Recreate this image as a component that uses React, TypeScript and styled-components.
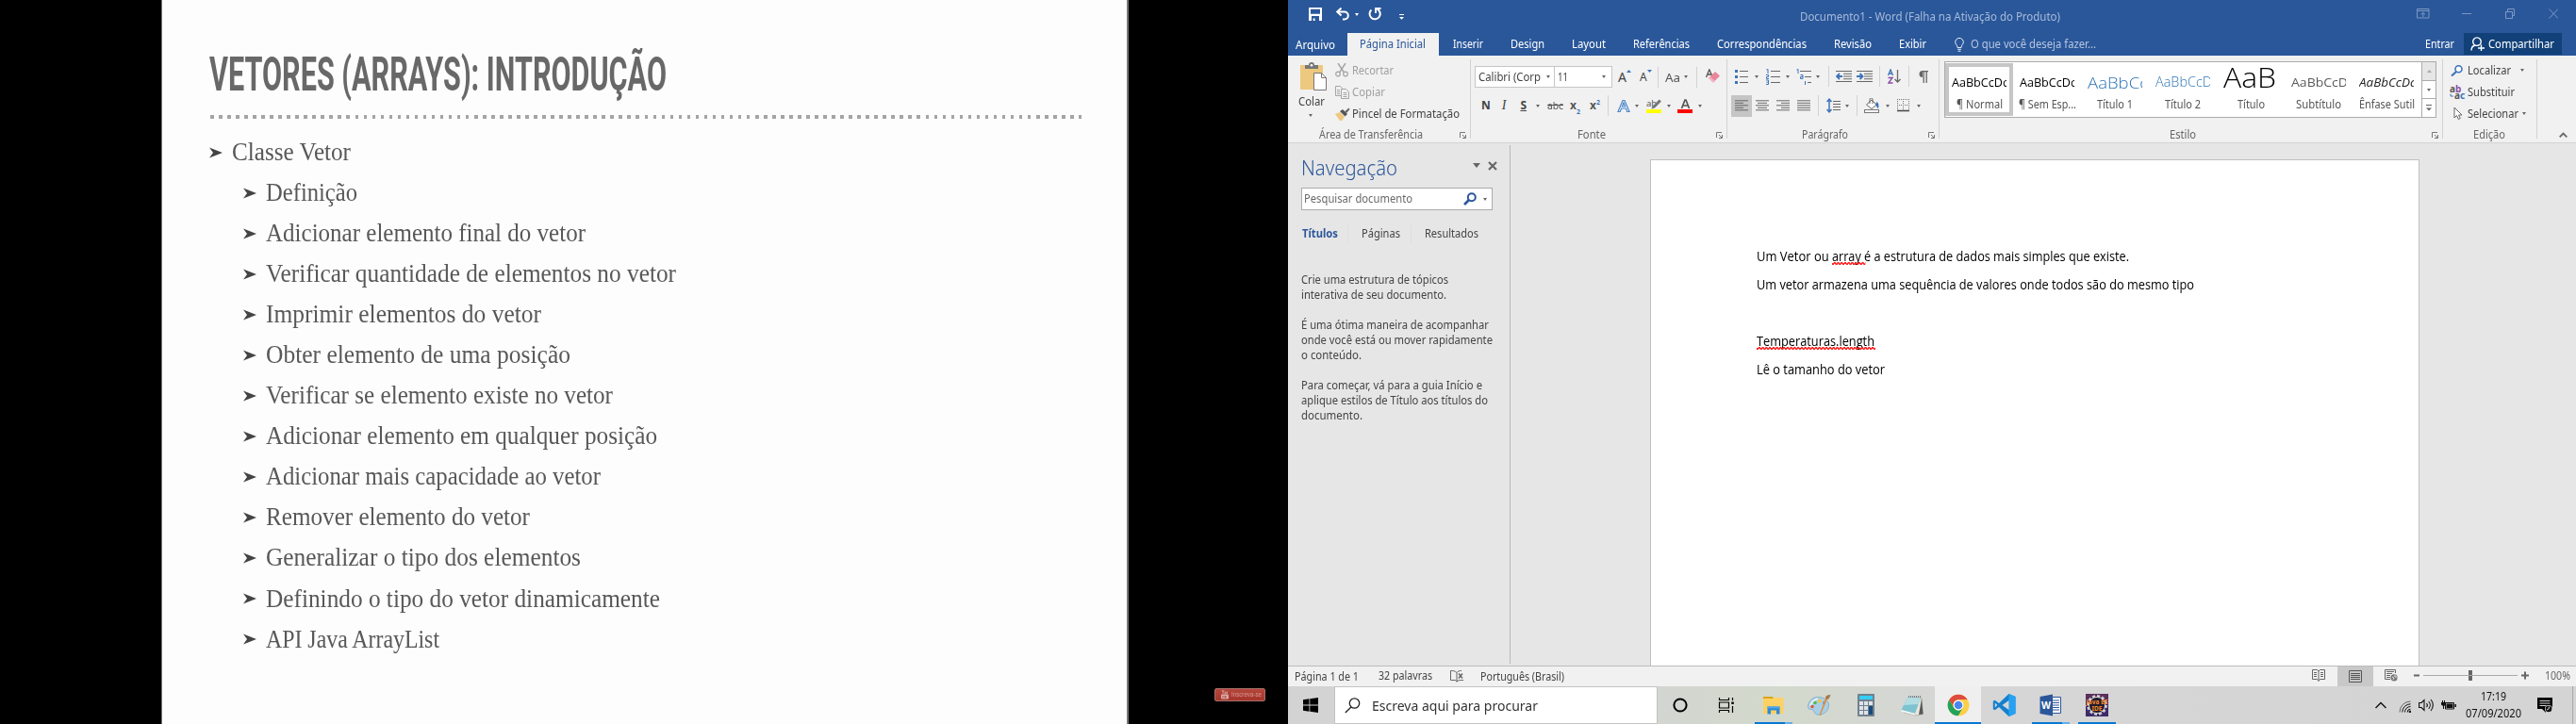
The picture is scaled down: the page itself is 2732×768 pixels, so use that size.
import React, { useLayoutEffect, useRef, useState } from "react";
import styled, { createGlobalStyle, css } from "styled-components";

const UI = `"Noto Sans", "Open Sans", sans-serif`;
const DOC = `"Open Sans", "Noto Sans", sans-serif`;
const SERIF = `"Liberation Serif", serif`;

const GlobalStyle = createGlobalStyle`
  *, *::before, *::after { box-sizing: border-box; }
  body { margin: 0; background: #000; font-family: ${UI}; overflow: hidden; }
  svg { display: block; flex: none; }
`;

/* ---------- text fitted to a fixed advance width ---------- */

const FitBox = styled.span<{ $w: number; $l: number; $size: number; $font: string }>`
  display: block;
  flex: none;
  width: ${(p) => p.$w}px;
  margin-left: ${(p) => p.$l}px;
  font-family: ${(p) => p.$font};
  font-size: ${(p) => p.$size}px;
  white-space: nowrap;
`;

const FitInner = styled.span<{ $weight: number; $color: string; $italic: boolean }>`
  display: inline-block;
  transform-origin: 0 50%;
  font-weight: ${(p) => p.$weight};
  font-style: ${(p) => (p.$italic ? "italic" : "normal")};
  color: ${(p) => p.$color};
`;

type FitProps = {
  w: number;
  l?: number;
  size?: number;
  weight?: number;
  color?: string;
  font?: string;
  italic?: boolean;
  children: React.ReactNode;
};

function Fit({ w, l = 0, size = 12, weight = 400, color = "#444", font = UI, italic = false, children }: FitProps) {
  const ref = useRef<HTMLSpanElement>(null);
  const [scale, setScale] = useState(1);
  useLayoutEffect(() => {
    if (!ref.current) return;
    ref.current.style.transform = "none";
    const natural = ref.current.getBoundingClientRect().width;
    ref.current.style.transform = `scaleX(${w / natural})`;
    setScale(w / natural);
  }, [w]);
  return (
    <FitBox $w={w} $l={l} $size={size} $font={font}>
      <FitInner
        ref={ref}
        $weight={weight}
        $color={color}
        $italic={italic}
        style={{ transform: `scaleX(${scale})` }}
      >
        {children}
      </FitInner>
    </FitBox>
  );
}

/* ---------- small shared parts ---------- */

const Desktop = styled.div`
  display: flex;
  width: 2732px;
  height: 768px;
`;

const Line = styled.div<{ $h: number; $pl?: number; $pt?: number }>`
  display: flex;
  align-items: center;
  height: ${(p) => p.$h}px;
  line-height: 16px;
  padding-left: ${(p) => p.$pl ?? 0}px;
  padding-top: ${(p) => p.$pt ?? 0}px;
`;

const Slot = styled.div<{ $l?: number; $t?: number }>`
  flex: none;
  margin-left: ${(p) => p.$l ?? 0}px;
  margin-top: ${(p) => p.$t ?? 0}px;
`;

const ThinRule = styled.div<{ $l: number }>`
  flex: none;
  width: 1px;
  height: 22px;
  margin-left: ${(p) => p.$l}px;
  background: #d2d2d2;
`;

const Arrow = styled.div<{ $l?: number; $c?: string; $s?: number }>`
  flex: none;
  width: 0;
  height: 0;
  margin-left: ${(p) => p.$l ?? 0}px;
  border: ${(p) => p.$s ?? 2.5}px solid transparent;
  border-top: ${(p) => (p.$s ?? 2.5) + 0.5}px solid ${(p) => p.$c ?? "#666"};
  border-bottom: 0;
`;

/* ---------- slide ---------- */

const VideoPane = styled.section`
  display: flex;
  flex: none;
  width: 1366px;
  background: #000;
`;

const Slide = styled.div`
  width: 1026px;
  margin-left: 171px;
  padding: 47px 48px 0 50px;
  background: #fdfdfd;
  border-left: 1px solid #777;
  border-right: 2px solid #777;
`;

const SlideHeading = styled.h1`
  margin: 0;
  height: 64px;
  line-height: 64px;
  filter: blur(0.6px);
`;

const Dots = styled.div`
  height: 4px;
  margin: 11px 0 0 1px;
  background: repeating-linear-gradient(90deg, #a4a4a4 0 3.6px, transparent 3.6px 9.03px);
  filter: blur(0.6px);
`;

const Topics = styled.ul`
  list-style: none;
  margin: 14px 0 0;
  padding: 0;
  filter: blur(0.55px);
`;

const Topic = styled.li<{ $sub: boolean }>`
  display: flex;
  align-items: center;
  height: 43.06px;
  line-height: 43px;
  padding-left: ${(p) => (p.$sub ? 36 : 0)}px;
  svg { margin: 0 10px 0 0; }
`;

const SubscribeArea = styled.div`
  display: flex;
  flex: 1;
  align-items: flex-end;
  justify-content: flex-end;
  padding: 0 24px 24px 0;
`;

const SubscribeBadge = styled.div`
  display: flex;
  align-items: center;
  width: 54px;
  height: 14px;
  padding-left: 6px;
  line-height: 12px;
  background: linear-gradient(#b5463c, #a5352b);
  border: 1px solid #a8706a;
  border-radius: 2px;
  filter: blur(0.35px);
`;

const topics: [string, number][] = [
  ["Classe Vetor", 126],
  ["Definição", 97],
  ["Adicionar elemento final do vetor", 339],
  ["Verificar quantidade de elementos no vetor", 435],
  ["Imprimir elementos do vetor", 292],
  ["Obter elemento de uma posição", 323],
  ["Verificar se elemento existe no vetor", 368],
  ["Adicionar elemento em qualquer posição", 415],
  ["Adicionar mais capacidade ao vetor", 355],
  ["Remover elemento do vetor", 280],
  ["Generalizar o tipo dos elementos", 334],
  ["Definindo o tipo do vetor dinamicamente", 418],
  ["API Java ArrayList", 184],
];

function SlideView() {
  return (
    <VideoPane>
      <Slide>
        <SlideHeading>
          <Fit w={485} size={50} weight={700} color="#686868" font="Roboto, sans-serif">
            VETORES (ARRAYS): INTRODUÇÃO
          </Fit>
        </SlideHeading>
        <Dots />
        <Topics>
          {topics.map(([text, w], i) => (
            <Topic key={text} $sub={i > 0}>
              <svg width="14" height="12" viewBox="0 0 14 12">
                <path d="M0 0.5L14 6L0 11.5L4 6Z" fill="#444" />
              </svg>
              <Fit w={w} size={26.3} color="#585858" font={SERIF}>
                {text}
              </Fit>
            </Topic>
          ))}
        </Topics>
      </Slide>
      <SubscribeArea>
        <SubscribeBadge>
          <svg width="8" height="10" viewBox="0 0 8 10">
            <path d="M1 0l1 2v2M3 0l-1 2M4 1.5v2.5h1.2V1.5M6.5 1.5V4" stroke="#d9aaa5" fill="none" strokeWidth=".8" />
            <rect y="4.6" width="8" height="5" rx="1" fill="#d9aaa5" />
            <path d="M2 6v2.5M4 6v2.2h1V6" stroke="#a5352b" fill="none" strokeWidth=".7" />
          </svg>
          <Fit w={32} l={3} size={6.5} color="#d59a94" font='"Liberation Sans", sans-serif'>
            Inscreva-se
          </Fit>
        </SubscribeBadge>
      </SubscribeArea>
    </VideoPane>
  );
}

/* ---------- word: title bar and tabs ---------- */

const WordWindow = styled.section`
  display: flex;
  flex-direction: column;
  flex: none;
  width: 1366px;
  background: #e6e6e6;
`;

const TitleBar = styled.header`
  display: flex;
  align-items: center;
  height: 35px;
  padding: 0 0 5px 22px;
  line-height: 16px;
  background: #2a579a;
`;

const TabBar = styled.nav`
  display: flex;
  align-items: center;
  height: 24px;
  line-height: 16px;
  background: #2a579a;
`;

const ActiveTab = styled.div`
  display: flex;
  align-items: center;
  width: 97px;
  height: 24px;
  margin-left: 13px;
  padding-left: 13px;
  background: #f1f1f1;
`;

const ShareButton = styled.div`
  display: flex;
  align-items: center;
  width: 104px;
  height: 23px;
  margin: 0 0 1px 10px;
  padding-left: 7px;
  background: #124078;
`;

function TitleRow() {
  return (
    <TitleBar>
      <svg width="14" height="14" viewBox="0 0 14 14">
        <path d="M0 0h14v14H0z M2 1.8v5h10v-5z M3 9v5h1.6v-2.6h2v2.6H11V9z" fill="#fff" fillRule="evenodd" />
      </svg>
      <Slot $l={15}>
        <svg width="14" height="14" viewBox="0 0 14 14">
          <path d="M1.5 4.5h7.3a4 4 0 0 1 0 8H7" fill="none" stroke="#fff" strokeWidth="2" />
          <path d="M5.5 0.5L1.3 4.5l4.2 4" fill="none" stroke="#fff" strokeWidth="2" />
        </svg>
      </Slot>
      <Arrow $l={6} $c="#fff" />
      <Slot $l={10}>
        <svg width="14" height="14" viewBox="0 0 14 14">
          <path d="M9.5 1.6A5.6 5.6 0 1 1 3.4 2.5" fill="none" stroke="#fff" strokeWidth="2" />
          <path d="M8 0v6M8 1h5.5" fill="none" stroke="#fff" strokeWidth="1.8" />
        </svg>
      </Slot>
      <Slot $l={19} $t={5}>
        <svg width="5" height="6" viewBox="0 0 5 6">
          <path d="M0 0h5v1H0zM0 3h5L2.5 5.8z" fill="#fff" />
        </svg>
      </Slot>
      <Slot $l={420} $t={5}>
        <Fit w={276} color="#a6bad8">
          Documento1 - Word (Falha na Ativação do Produto)
        </Fit>
      </Slot>
      <Slot $l={378}>
        <svg width="150" height="12" viewBox="0 0 150 12" fill="none" stroke="#7d98c2">
          <path d="M0.5 0.5h12.5v9.5H0.5zM0.5 2.5h12.5M6.8 9V4.5M4.5 6.5l2.3-2.2l2.3 2.2" />
          <path d="M48 5.5h10" />
          <path d="M94.500 3.500h7v7h-7zM96.500 3.500v-3h7v7h-2" />
          <path d="M140.500 0.500l9.500 10M150 0.500l-9.500 10" />
        </svg>
      </Slot>
    </TitleBar>
  );
}

function Tabs() {
  const items: [string, number, number][] = [
    ["Inserir", 32, 15],
    ["Design", 36, 29],
    ["Layout", 36, 29],
    ["Referências", 60, 29],
    ["Correspondências", 95, 29],
    ["Revisão", 40, 29],
    ["Exibir", 29, 29],
  ];
  return (
    <TabBar>
      <Slot $l={8} $t={2}>
        <Fit w={42} color="#fff">Arquivo</Fit>
      </Slot>
      <ActiveTab>
        <Fit w={70} color="#2a579a">Página Inicial</Fit>
      </ActiveTab>
      {items.map(([label, w, l]) => (
        <Fit key={label} w={w} l={l} color="#fff">{label}</Fit>
      ))}
      <Slot $l={30}>
        <svg width="10" height="15" viewBox="0 0 10 15" fill="none" stroke="#e8eef7">
          <path d="M3 10.500C3 8 0.700 7 0.700 4.700a4.300 4.300 0 0 1 8.600 0C9.300 7 7 8 7 10.500zM3.200 12.300h3.600M3.600 14.200h2.800" />
        </svg>
      </Slot>
      <Fit w={133} l={7} color="#b5c6e0">O que você deseja fazer...</Fit>
      <Fit w={31} l={349} color="#fff">Entrar</Fit>
      <ShareButton>
        <svg width="15" height="15" viewBox="0 0 15 15" fill="none" stroke="#fff" strokeWidth="1.4">
          <path d="M1 14.500C1 11.500 3 9.500 5 9a4.300 4.300 0 1 1 4 0M5 9c1 .6 2 .6 4 0M8 12h7M11.500 8.500v6.500" />
        </svg>
        <Fit w={70} l={4} color="#fff">Compartilhar</Fit>
      </ShareButton>
    </TabBar>
  );
}

/* ---------- word: ribbon ---------- */

const Ribbon = styled.div`
  display: flex;
  height: 93px;
  background: #f1f1f1;
  border-bottom: 1px solid #d2d2d2;
`;

const Group = styled.div<{ $w: number }>`
  display: flex;
  flex: none;
  flex-direction: column;
  width: ${(p) => p.$w}px;
`;

const GroupBody = styled.div<{ $row?: boolean }>`
  display: flex;
  flex-direction: ${(p) => (p.$row ? "row" : "column")};
  height: 73px;
  padding-top: 4px;
`;

const GroupRule = styled.div`
  flex: none;
  width: 1px;
  margin: 4px 0;
  background: #d2d2d2;
`;

const PasteColumn = styled.div`
  display: flex;
  flex-direction: column;
  width: 50px;
  padding-top: 3px;
  line-height: 16px;
`;

const Combo = styled.div<{ $w: number; $joined?: boolean }>`
  display: flex;
  align-items: center;
  width: ${(p) => p.$w}px;
  height: 23px;
  padding-left: 3px;
  background: #fff;
  border: 1px solid #c6c6c6;
  ${(p) => p.$joined && css`border-left: 0;`}
`;

const Glyph = styled.span<{ $l?: number; $s?: number; $b?: boolean; $i?: boolean; $u?: boolean; $c?: string }>`
  flex: none;
  margin-left: ${(p) => p.$l ?? 0}px;
  font-size: ${(p) => p.$s ?? 13}px;
  font-weight: ${(p) => (p.$b ? 700 : 400)};
  font-style: ${(p) => (p.$i ? "italic" : "normal")};
  font-family: ${(p) => (p.$i ? SERIF : UI)};
  text-decoration: ${(p) => (p.$u ? "underline" : "none")};
  color: ${(p) => p.$c ?? "#444"};
`;

const Pressed = styled.div`
  display: flex;
  align-items: center;
  justify-content: center;
  width: 22px;
  height: 23px;
  margin-left: 4px;
  background: #c5c5c5;
`;

const Launcher = () => (
  <svg width="7" height="7" viewBox="0 0 7 7" fill="none" stroke="#777">
    <path d="M0.500 6V0.500H6M3 3l3 3M6.500 3v3.500H3" />
  </svg>
);

function GroupLabel({ text, w, l, gap }: { text: string; w: number; l: number; gap?: number }) {
  return (
    <Line $h={19} $pt={2}>
      <Fit w={w} l={l} color="#666">{text}</Fit>
      {gap !== undefined && (
        <Slot $l={gap} $t={1}>
          <Launcher />
        </Slot>
      )}
    </Line>
  );
}

function ClipboardGroup() {
  return (
    <Group $w={193}>
      <GroupBody $row>
        <PasteColumn>
          <Slot $l={13}>
            <svg width="28" height="31" viewBox="0 0 28 31">
              <path d="M0 3h24v26H0z" fill="#edc87f" />
              <path d="M5 7V3h4a3 3 0 0 1 6 0h4v4z" fill="#777" />
              <circle cx="12" cy="3.300" r="1.300" fill="#fff" />
              <path d="M14.500 11.500h8l5 5v13h-13z" fill="#fff" stroke="#777" />
              <path d="M22.500 11.500v5h5" fill="none" stroke="#777" />
            </svg>
          </Slot>
          <Slot $t={3}>
            <Fit w={28} l={11}>Colar</Fit>
          </Slot>
          <Slot $t={5}>
            <Arrow $l={22} />
          </Slot>
        </PasteColumn>
        <div>
          <Line $h={23}>
            <svg width="14" height="15" viewBox="0 0 14 15" fill="none" stroke="#a5a5a5" strokeWidth="1.500">
              <path d="M3 0l6.500 10M11 0L4.500 10" />
              <circle cx="3" cy="11.500" r="2.300" strokeWidth="1.200" />
              <circle cx="11" cy="11.500" r="2.300" strokeWidth="1.200" />
            </svg>
            <Fit w={44} l={4} color="#a0a0a0">Recortar</Fit>
          </Line>
          <Line $h={23}>
            <svg width="15" height="14" viewBox="0 0 15 14" fill="#f1f1f1" stroke="#a5a5a5">
              <path d="M0.500 0.500h5l2 2v8h-7zM2 4.500h3M2 6.500h3M2 8.500h3" />
              <path d="M6.500 3.500h5l3 3v7h-8zM8.500 7.500h4M8.500 9.500h4M8.500 11.500h4" />
            </svg>
            <Fit w={35} l={3} color="#a0a0a0">Copiar</Fit>
          </Line>
          <Line $h={23}>
            <svg width="16" height="14" viewBox="0 0 16 14">
              <path d="M0 7l5-2l5 5l-3 4H5z" fill="#edc87f" />
              <path d="M5 4l3-2l5 5l-2.500 2.500z" fill="#555" />
              <path d="M10 4.500L14.500 0.500l1 1.500L12 6z" fill="#666" />
            </svg>
            <Fit w={114} l={2}>Pincel de Formatação</Fit>
          </Line>
        </div>
      </GroupBody>
      <GroupLabel text="Área de Transferência" w={110} l={33} gap={39} />
    </Group>
  );
}

function FontGroup() {
  return (
    <Group $w={271}>
      <GroupBody>
        <Line $h={37} $pl={4}>
          <Combo $w={85}>
            <Fit w={66}>Calibri (Corp</Fit>
            <Arrow $l={6} />
          </Combo>
          <Combo $w={61} $joined>
            <Fit w={11}>11</Fit>
            <Arrow $l={36} />
          </Combo>
          <Glyph $l={6} $s={14}>A</Glyph>
          <Slot $t={-12}>
            <svg width="5" height="3"><path d="M0 3L2.500 0L5 3z" fill="#3e74b8" /></svg>
          </Slot>
          <Glyph $l={9} $s={12}>A</Glyph>
          <Slot $t={-12}>
            <svg width="5" height="3"><path d="M0 0L2.500 3L5 0z" fill="#3e74b8" /></svg>
          </Slot>
          <ThinRule $l={6} />
          <Fit w={16} l={7} size={13} color="#555">Aa</Fit>
          <Arrow $l={4} />
          <ThinRule $l={9} />
          <Slot $l={9} $t={-2}>
            <svg width="15" height="15" viewBox="0 0 15 15">
              <path d="M0.500 9L3.800 0.800L7 8M1.700 6h4" fill="none" stroke="#555" strokeWidth="1.300" />
              <path d="M3 10l7-7l5 4.500l-7 7z" fill="#e8869a" />
              <path d="M4.500 8.500L10 13L8 14.500L3 10z" fill="#f3b6c1" />
            </svg>
          </Slot>
        </Line>
        <Line $h={24} $pl={11}>
          <Glyph $b $s={12}>N</Glyph>
          <Glyph $i $l={12} $s={14}>I</Glyph>
          <Glyph $b $u $l={15} $s={12}>S</Glyph>
          <Arrow $l={10} />
          <Fit w={17} l={8} size={11.500} color="#555">
            <s>abc</s>
          </Fit>
          <Glyph $b $l={7} $s={12} $c="#555">x</Glyph>
          <Slot $t={9}><Glyph $b $s={7} $c="#3e74b8">2</Glyph></Slot>
          <Glyph $b $l={10} $s={12} $c="#555">x</Glyph>
          <Slot $t={-10}><Glyph $b $s={7} $c="#3e74b8">2</Glyph></Slot>
          <ThinRule $l={8} />
          <Slot $l={9}>
            <svg width="14" height="15" viewBox="0 0 14 15">
              <path d="M1 13.500L6 1.500h2l5 12h-2.300l-1.200-3.500H4.500L3.300 13.500zM5.300 8h3.400L7 3.800z" fill="#fff" stroke="#4a86c8" strokeWidth="1.200" />
            </svg>
          </Slot>
          <Arrow $l={5} />
          <Slot $l={8}>
            <svg width="17" height="16" viewBox="0 0 17 16">
              <text x="0" y="9" fontFamily="Noto Sans" fontSize="9.500" fill="#555">ab</text>
              <path d="M6 9.500L13.500 1.500L16 3.500L9 10.500L5.500 11.500z" fill="#777" />
              <rect y="12" width="16" height="4" fill="#ff0" />
            </svg>
          </Slot>
          <Arrow $l={5} />
          <Slot $l={7}>
            <svg width="17" height="16" viewBox="0 0 17 16">
              <path d="M4.500 11L8 2h1l3.500 9M5.800 8h5.400" fill="none" stroke="#555" strokeWidth="1.700" />
              <rect y="12" width="16" height="4" fill="#f00" />
            </svg>
          </Slot>
          <Arrow $l={5} />
        </Line>
      </GroupBody>
      <GroupLabel text="Fonte" w={30} l={113} gap={117} />
    </Group>
  );
}

const Bars = ({ rows }: { rows: [number, number][] }) => (
  <svg width="14" height="12" viewBox="0 0 14 12">
    {rows.map(([x, w], i) => (
      <rect key={i} x={x} y={i * 2.5 + 0.3} width={w} height="1" fill="#666" />
    ))}
  </svg>
);

function ParagraphGroup() {
  return (
    <Group $w={224}>
      <GroupBody>
        <Line $h={36} $pl={8}>
          <svg width="14" height="15" viewBox="0 0 14 15">
            <path d="M0 0h3v3H0zM0 6h3v3H0zM0 12h3v3H0z" fill="#3e74b8" />
            <path d="M5 1h9v1H5zM5 7h9v1H5zM5 13h9v1H5z" fill="#666" />
          </svg>
          <Arrow $l={7} />
          <Slot $l={8}>
            <svg width="15" height="17" viewBox="0 0 15 17">
              <path d="M0.500 1L2 0.500V5M0 6.500h2.500v2H0.500v2H3M0 12h2.500v4.500H0M0.500 14.200h2" stroke="#3e74b8" fill="none" />
              <path d="M5 2h10v1H5zM5 8h10v1H5zM5 14h10v1H5z" fill="#666" />
            </svg>
          </Slot>
          <Arrow $l={6} />
          <Slot $l={7}>
            <svg width="17" height="17" viewBox="0 0 17 17">
              <path d="M0.500 1L2 0.500V5M4.500 6.500H7v4H4.500v-2H7M9.500 11.500v0M9.500 13v4" stroke="#3e74b8" fill="none" />
              <path d="M4 2h12v1H4zM9 8h7v1H9zM12 14h4v1h-4z" fill="#666" />
            </svg>
          </Slot>
          <Arrow $l={4} />
          <ThinRule $l={9} />
          <Slot $l={7}>
            <svg width="17" height="12" viewBox="0 0 17 12">
              <path d="M0 0h17v1H0zM8 2.800h9v1H8zM8 5.500h9v1H8zM8 8.200h9v1H8zM0 11h17v1H0z" fill="#666" />
              <path d="M7 6H1.500M4 3L1 6l3 3" stroke="#3e74b8" strokeWidth="1.800" fill="none" />
            </svg>
          </Slot>
          <Slot $l={5}>
            <svg width="17" height="12" viewBox="0 0 17 12">
              <path d="M0 0h17v1H0zM8 2.800h9v1H8zM8 5.500h9v1H8zM8 8.200h9v1H8zM0 11h17v1H0z" fill="#666" />
              <path d="M0 6h6M3.500 3l3 3l-3 3" stroke="#3e74b8" strokeWidth="1.800" fill="none" />
            </svg>
          </Slot>
          <ThinRule $l={7} />
          <Slot $l={8}>
            <svg width="14" height="16" viewBox="0 0 14 16" fill="none">
              <path d="M0.500 7L3 0.800L5.500 7M1.500 5h3" stroke="#3e74b8" strokeWidth="1.300" />
              <path d="M0.500 9.500h4.500L0.800 15H5.500" stroke="#8a4fa8" strokeWidth="1.400" />
              <path d="M10.500 1v13M7.500 11l3 3l3-3" stroke="#666" strokeWidth="1.300" />
            </svg>
          </Slot>
          <ThinRule $l={8} />
          <Slot $l={10}>
            <svg width="10" height="13" viewBox="0 0 10 13">
              <path d="M4 0h6v1.200H4zM4 0v7a3.500 3.500 0 0 1 0-7M4.500 0h1.300v13H4.500zM7.500 0h1.300v13H7.500z" fill="#666" />
            </svg>
          </Slot>
        </Line>
        <Line $h={26}>
          <Pressed>
            <Bars rows={[[0, 14], [0, 9], [0, 14], [0, 9], [0, 14]]} />
          </Pressed>
          <Slot $l={4}><Bars rows={[[0, 14], [2, 10], [0, 14], [2, 10], [0, 14]]} /></Slot>
          <Slot $l={8}><Bars rows={[[0, 14], [5, 9], [0, 14], [5, 9], [0, 14]]} /></Slot>
          <Slot $l={8}><Bars rows={[[0, 14], [0, 14], [0, 14], [0, 14], [0, 14]]} /></Slot>
          <ThinRule $l={8} />
          <Slot $l={8}>
            <svg width="15" height="16" viewBox="0 0 15 16">
              <path d="M3 1v14M0.500 4L3 1.200L5.500 4M0.500 12L3 14.800L5.500 12" stroke="#3e74b8" strokeWidth="1.500" fill="none" />
              <path d="M7 3h8v1H7zM7 6h8v1H7zM7 9h8v1H7zM7 12h8v1H7z" fill="#666" />
            </svg>
          </Slot>
          <Arrow $l={5} />
          <ThinRule $l={8} />
          <Slot $l={7}>
            <svg width="17" height="16" viewBox="0 0 17 16">
              <path d="M2.500 7L8 2l5 5l-5 4.500z" fill="#fff" stroke="#666" />
              <path d="M6 6V1.500a1.500 1.500 0 0 1 3 0V6" fill="none" stroke="#666" />
              <path d="M13 4c2.500 1 3 4 2 7c-2-1-2-3-2.500-4z" fill="#3e74b8" />
              <rect x="0.500" y="12.500" width="15" height="3" fill="#fff" stroke="#777" />
            </svg>
          </Slot>
          <Arrow $l={6} />
          <Slot $l={8}>
            <svg width="13" height="14" viewBox="0 0 13 14">
              <path d="M0.500 0v12M12.500 0v12M6.500 0v12M0 0.500h13M0 6.500h13" stroke="#777" strokeDasharray="1 1" />
              <path d="M0 12.500h13" stroke="#444" strokeWidth="1.500" />
            </svg>
          </Slot>
          <Arrow $l={8} />
        </Line>
      </GroupBody>
      <GroupLabel text="Parágrafo" w={49} l={79} gap={85} />
    </Group>
  );
}

const Gallery = styled.div`
  display: flex;
  width: 522px;
  height: 60px;
  margin: 2px 0 0 5px;
  background: #fff;
  border: 1px solid #ababab;
`;

const StyleCard = styled.div<{ $active: boolean }>`
  display: flex;
  flex-direction: column;
  align-items: center;
  width: 72px;
  height: 56px;
  margin-top: 1px;
  border: 4px solid ${(p) => (p.$active ? "#c6c6c6" : "transparent")};
`;

const Preview = styled.div<{ $lift: number }>`
  display: flex;
  align-items: center;
  width: 58px;
  height: 30px;
  padding-top: ${(p) => Math.max(0, 4 - p.$lift)}px;
  padding-bottom: ${(p) => Math.max(0, p.$lift - 4)}px;
  overflow: hidden;
  line-height: 22px;
`;

const CardName = styled.div`
  height: 16px;
  margin-top: 2px;
  line-height: 16px;
`;

const GalleryButtons = styled.div`
  display: flex;
  flex-direction: column;
  width: 15px;
  border-left: 1px solid #ababab;
`;

const GalleryButton = styled.div<{ $off?: boolean }>`
  display: flex;
  flex: 1;
  align-items: center;
  justify-content: center;
  background: ${(p) => (p.$off ? "#e6e6e6" : "#fff")};
  & + & { border-top: 1px solid #ababab; }
`;

type StyleDef = {
  name: string;
  w: number;
  sample: string;
  sw: number;
  size: number;
  color: string;
  weight?: number;
  italic?: boolean;
  lift?: number;
};

const styleCards: StyleDef[] = [
  { name: "¶ Normal", w: 49, sample: "AaBbCcDc", sw: 60, size: 12.3, color: "#000" },
  { name: "¶ Sem Esp...", w: 61, sample: "AaBbCcDc", sw: 60, size: 12.3, color: "#000" },
  { name: "Título 1", w: 38, sample: "AaBbCc", sw: 64, size: 17, color: "#2e74b5", weight: 300 },
  { name: "Título 2", w: 38, sample: "AaBbCcD", sw: 60, size: 14.3, color: "#2e74b5", weight: 300, lift: 3 },
  { name: "Título", w: 29, sample: "AaB", sw: 56, size: 29, color: "#000", weight: 300, lift: 12 },
  { name: "Subtítulo", w: 48, sample: "AaBbCcD", sw: 60, size: 12.3, color: "#5a5a5a" },
  { name: "Ênfase Sutil", w: 59, sample: "AaBbCcDc", sw: 60, size: 12.3, color: "#222", italic: true },
];

function StyleGroup() {
  return (
    <Group $w={533}>
      <GroupBody>
        <Gallery>
          {styleCards.map((s, i) => (
            <StyleCard key={s.name} $active={i === 0}>
              <Preview $lift={s.lift ?? 0}>
                <Fit w={s.sw} size={s.size} color={s.color} weight={s.weight} italic={s.italic} font={DOC}>
                  {s.sample}
                </Fit>
              </Preview>
              <CardName>
                <Fit w={s.w} color="#555">{s.name}</Fit>
              </CardName>
            </StyleCard>
          ))}
          <Slot $l={1} />
          <GalleryButtons>
            <GalleryButton $off>
              <svg width="5" height="3"><path d="M0 3L2.500 0L5 3z" fill="#aaa" /></svg>
            </GalleryButton>
            <GalleryButton><Arrow /></GalleryButton>
            <GalleryButton>
              <svg width="6" height="7"><path d="M0 0h6v1H0zM0 3.500h6L3 6.500z" fill="#666" /></svg>
            </GalleryButton>
          </GalleryButtons>
        </Gallery>
      </GroupBody>
      <GroupLabel text="Estilo" w={28} l={244} gap={250} />
    </Group>
  );
}

function EditGroup() {
  return (
    <Group $w={99}>
      <GroupBody>
        <Line $h={23} $pl={8}>
          <svg width="13" height="12" viewBox="0 0 13 12" fill="none" stroke="#3e74b8">
            <circle cx="8.500" cy="4.300" r="3.500" strokeWidth="1.600" fill="#fff" />
            <path d="M6 7L1 11.500" strokeWidth="2.200" />
          </svg>
          <Fit w={46} l={5}>Localizar</Fit>
          <Arrow $l={10} />
        </Line>
        <Line $h={23} $pl={7}>
          <svg width="17" height="16" viewBox="0 0 17 16" fontFamily="Noto Sans" fontSize="10" fontWeight="700">
            <text x="0" y="8" fill="#555" textLength="6">a</text>
            <text x="6" y="8" fill="#8a4fa8" textLength="6">b</text>
            <text x="5" y="15" fill="#555" textLength="6">a</text>
            <text x="11" y="15" fill="#3e74b8" textLength="5">c</text>
            <path d="M1 9.500v2.500h3" stroke="#3e74b8" fill="none" />
          </svg>
          <Fit w={50} l={2}>Substituir</Fit>
        </Line>
        <Line $h={23} $pl={11}>
          <svg width="10" height="15" viewBox="0 0 10 15">
            <path d="M1 1v11l2.500-2.500l1.800 4l2-1l-1.800-3.500H9z" fill="#fff" stroke="#666" />
          </svg>
          <Fit w={54} l={5}>Selecionar</Fit>
          <Arrow $l={4} />
        </Line>
      </GroupBody>
      <GroupLabel text="Edição" w={34} l={32} />
    </Group>
  );
}

const CollapseCorner = styled.div`
  display: flex;
  align-items: flex-end;
  padding: 0 0 5px 23px;
`;

/* ---------- word: workspace ---------- */

const Workspace = styled.div`
  display: flex;
  height: 554px;
`;

const NavPanel = styled.aside`
  width: 236px;
  height: 550px;
  margin-top: 2px;
  padding: 10px 0 0 14px;
  border-right: 1px solid #b8b8b8;
`;

const NavSearch = styled.div`
  display: flex;
  align-items: center;
  width: 203px;
  height: 24px;
  margin-top: 3px;
  padding-left: 2px;
  line-height: 16px;
  background: #fff;
  border: 1px solid #ababab;
`;

const NavDivider = styled.div<{ $l: number }>`
  width: 1px;
  height: 19px;
  margin-left: ${(p) => p.$l}px;
  background: #dedede;
`;

const Hint = styled.div`
  margin-bottom: 16px;
  line-height: 16px;
`;

const hints: [string, number][][] = [
  [["Crie uma estrutura de tópicos", 156], ["interativa de seu documento.", 154]],
  [["É uma ótima maneira de acompanhar", 199], ["onde você está ou mover rapidamente", 203], ["o conteúdo.", 64]],
  [["Para começar, vá para a guia Início e", 192], ["aplique estilos de Título aos títulos do", 198], ["documento.", 65]],
];

const Page = styled.article`
  width: 816px;
  height: 537px;
  margin: 17px 0 0 148px;
  padding: 87px 0 0 112px;
  background: #fff;
  border: 1px solid #c0c0c0;
  border-bottom: 0;
`;

const Paragraph = styled.p`
  display: flex;
  height: 30px;
  margin: 0;
  line-height: 30px;
`;

const Misspelled = styled.span`
  position: relative;
  &::after {
    content: "";
    position: absolute;
    left: 0;
    right: -1px;
    bottom: 0;
    height: 3px;
    background:
      linear-gradient(135deg, transparent 40%, #f22 40% 65%, transparent 65%) 0 0 / 4px 3px,
      linear-gradient(45deg, transparent 40%, #f22 40% 65%, transparent 65%) 2px 0 / 4px 3px;
  }
`;

function Navigation() {
  return (
    <NavPanel>
      <Line $h={32}>
        <Slot $t={-4}>
          <Fit w={102} size={21} weight={300} color="#2b579a">Navegação</Fit>
        </Slot>
        <Slot $l={80} $t={-9}><Arrow $s={4.5} /></Slot>
        <Slot $l={8} $t={-9}>
          <svg width="10" height="10" viewBox="0 0 10 10">
            <path d="M1 1l8 8M9 1L1 9" stroke="#666" strokeWidth="2.200" />
          </svg>
        </Slot>
      </Line>
      <NavSearch>
        <Fit w={115} color="#6a6a6a">Pesquisar documento</Fit>
        <Slot $l={54}>
          <svg width="14" height="14" viewBox="0 0 14 14" fill="none" stroke="#2b579a">
            <circle cx="8.800" cy="5.200" r="4" strokeWidth="2" />
            <path d="M6 8L1 13" strokeWidth="2.600" />
          </svg>
        </Slot>
        <Arrow $l={7} />
      </NavSearch>
      <Slot $t={13}>
        <Line $h={24}>
          <Fit w={38} l={1} weight={700} color="#2b579a">Títulos</Fit>
          <NavDivider $l={10} />
          <Fit w={41} l={14}>Páginas</Fit>
          <NavDivider $l={11} />
          <Fit w={57} l={14}>Resultados</Fit>
        </Line>
      </Slot>
      <Slot $t={29}>
        {hints.map((lines, i) => (
          <Hint key={i}>
            {lines.map(([t, w]) => (
              <Fit key={t} w={w}>{t}</Fit>
            ))}
          </Hint>
        ))}
      </Slot>
    </NavPanel>
  );
}

const docText = { size: 13.6, color: "#000", font: DOC };

/* ---------- word: status bar ---------- */

const StatusBar = styled.footer`
  display: flex;
  align-items: center;
  height: 22px;
  padding-left: 7px;
  line-height: 16px;
  background: #f1f1f1;
  border-top: 1px solid #bcbcbc;
`;

const ActiveView = styled.div`
  display: flex;
  align-items: center;
  justify-content: center;
  width: 38px;
  height: 21px;
  margin-left: 13px;
  background: #c8c8c8;
`;

function Status() {
  return (
    <StatusBar>
      <Fit w={68}>Página 1 de 1</Fit>
      <Slot $t={-2}><Fit w={57} l={21}>32 palavras</Fit></Slot>
      <Slot $l={19} $t={-1}>
        <svg width="15" height="13" viewBox="0 0 15 13" fill="none" stroke="#666">
          <path d="M7 11.500v1M7 2.500C5 0.500 3 0.500 0.500 0.500v10h4.500c1 0 2 1 2 1.500zM7 2.500c1-1.500 3-2 5-2M7 12c1-1.500 3-1.500 7-1.500" />
          <path d="M9 3.500l4 5M13 3.500l-4 5" strokeWidth="1.500" />
        </svg>
      </Slot>
      <Fit w={89} l={17}>Português (Brasil)</Fit>
      <Slot $l={793} $t={-2}>
        <svg width="14" height="13" viewBox="0 0 14 13" fill="none" stroke="#666">
          <path d="M7 2L5.500 0.500h-5v10h5L7 12.500L8.500 10.500h5v-10h-5zV12M2 3.500h3M2 5.500h3M2 7.500h3M9 3.500h3M9 5.500h3M9 7.500h3" />
        </svg>
      </Slot>
      <ActiveView>
        <svg width="14" height="13" viewBox="0 0 14 13" fill="none" stroke="#555">
          <path d="M0.500 0.500h13v12h-13zM2 3.500h10M2 5.500h10M2 7.500h10M2 9.500h10" />
        </svg>
      </ActiveView>
      <Slot $l={12} $t={-2}>
        <svg width="14" height="13" viewBox="0 0 14 13" fill="none" stroke="#666">
          <path d="M6 10.500H0.500v-10h11V4M2 2.500h8M2 4.500h6M2 6.500h4M2 8.500h4" />
          <circle cx="10" cy="8.800" r="3.600" fill="#777" stroke="none" />
          <path d="M8 8l2 1l-1 2M11 6l0 2h2" stroke="#f1f1f1" strokeWidth=".9" />
        </svg>
      </Slot>
      <Slot $l={17} $t={-2}>
        <svg width="122" height="11" viewBox="0 0 122 11">
          <path d="M0 4.500h6v2H0zM114 4.500h8v2h-8zM117 1.500h2v8h-2zM58 0h4v11h-4z" fill="#666" />
          <path d="M10 5h100v1H10z" fill="#aaa" />
        </svg>
      </Slot>
      <Slot $l={17} $t={-2}>
        <Fit w={27} color="#666">100%</Fit>
      </Slot>
    </StatusBar>
  );
}

/* ---------- taskbar ---------- */

const Taskbar = styled.footer`
  display: flex;
  height: 40px;
  background: linear-gradient(90deg, #d3d3d3 0, #d3d5d1 380px, #d3d9cc 520px, #d5d7d3 640px, #d6d6d6 750px, #d4d4d4 100%);
`;

const StartButton = styled.div`
  width: 49px;
  padding: 12px 0 0 16px;
`;

const SearchBox = styled.div`
  display: flex;
  align-items: center;
  width: 343px;
  padding-left: 10px;
  line-height: 20px;
  background: #fff;
  border: 1px solid #c3c3c3;
`;

const TaskCell = styled.div<{ $w?: number; $active?: boolean }>`
  display: flex;
  flex: none;
  flex-direction: column;
  align-items: center;
  justify-content: space-between;
  width: ${(p) => p.$w ?? 49}px;
  height: 40px;
  padding-top: 8px;
  background: ${(p) => (p.$active ? "#efefef" : "transparent")};
`;

const Running = styled.div<{ $w: number; $stacked?: boolean }>`
  width: ${(p) => p.$w}px;
  height: 2px;
  background: ${(p) => (p.$stacked ? "linear-gradient(90deg, #0a78d4 80%, #66aee8 80%)" : "#0a78d4")};
`;

const Clock = styled.div`
  width: 60px;
  margin-left: 9px;
  padding-top: 2px;
  line-height: 18px;
`;

const DesktopEdge = styled.div`
  width: 1px;
  margin-left: 20px;
  background: #a9a9a9;
`;

function TaskIcons() {
  return (
    <>
      <TaskCell $w={48}>
        <svg width="24" height="24"><circle cx="12" cy="12" r="6.600" fill="none" stroke="#000" strokeWidth="2" /></svg>
      </TaskCell>
      <TaskCell $w={50}>
        <svg width="24" height="24" fill="none" stroke="#000" strokeWidth="1.200">
          <path d="M4.500 4v2.500h10V4M4.500 20v-2.500h10V20M4.500 9h10v6h-10zM18.500 4v3M18.500 13v7" />
          <path d="M17.300 8.500h2.500v2.500h-2.500z" fill="#000" stroke="none" />
        </svg>
      </TaskCell>
      <TaskCell>
        <svg width="24" height="24">
          <path d="M1 3h10l2 3H1z" fill="#d9a514" />
          <path d="M1 5h10l1-1h10.500v17H1z" fill="#fdd163" />
          <path d="M5.500 21.500v-8h13v8h-3.500v-4H9v4z" fill="#2f8bd8" />
          <path d="M5.500 13.500h13v1.800h-13z" fill="#4fa9ee" />
        </svg>
        <Running $w={40} $stacked />
      </TaskCell>
      <TaskCell>
        <svg width="26" height="24">
          <path d="M11 3.500c-6 0-10.500 5-10.500 10c0 3 2 3 4 3c3 0 2 5 6 5.500c6 1 12-3.500 12-10c0-5-5-8.500-11.500-8.500z" fill="#a9cfe6" stroke="#7aa6c2" strokeWidth=".8" />
          <path d="M3 13c1-4 4-7 8-8" stroke="#dff0fa" fill="none" strokeWidth="2" />
          <circle cx="8" cy="9.500" r="1.800" fill="#58b947" /><circle cx="13" cy="7.500" r="1.900" fill="#f6c343" />
          <circle cx="5" cy="13.500" r="1.700" fill="#e0523f" /><circle cx="17.500" cy="9.500" r="1.500" fill="#5b8fe0" />
          <path d="M21.500 4L13.500 23l-1-.5L19.500 3.500z" fill="#e28a3a" /><path d="M19 4.500c0-3 3-3.500 5.500-3.500c-1 3-2 5-4 5z" fill="#a97a50" />
        </svg>
      </TaskCell>
      <TaskCell>
        <svg width="18" height="24">
          <rect width="18" height="24" rx="1" fill="#71808c" />
          <path d="M2 2h14v4H2z" fill="#35cdf5" />
          <path d="M2 8h4v4H2zM7 8h4v4H7zM12 8h4v4h-4zM2 13h4v4H2zM7 13h4v4H7zM2 18h4v4H2zM7 18h4v4H7z" fill="#dde3e8" />
          <path d="M12 13h4v9h-4z" fill="#174a7c" />
        </svg>
      </TaskCell>
      <TaskCell>
        <svg width="26" height="24">
          <path d="M9 3l14 1.500l1.500 17L18 23L4 20z" fill="#e9e6da" stroke="#9a9a8c" strokeWidth=".6" />
          <path d="M23 5l1.500 16.500L20 22z" fill="#55585a" />
          <path d="M8.500 3L22 4.500L16 21L1.500 17z" fill="#7fc2d0" />
          <path d="M8.500 3L22 4.500L19.500 11L4 12z" fill="#b4dde2" />
          <path d="M9 3h13" stroke="#667" strokeWidth="1.500" strokeDasharray="1 1" />
          <path d="M1.500 17L16 21v1.500L1.500 19z" fill="#eef6f7" />
        </svg>
      </TaskCell>
      <TaskCell $active>
        <svg width="24" height="24" viewBox="-12 -12 24 24">
          <circle r="11.300" fill="#fdd04b" />
          <path d="M-9.800 -5.650A11.300 11.300 0 0 1 9.800 -5.650H0A5.650 5.650 0 0 0 -4.900 2.800z" fill="#de4c3f" />
          <path d="M-9.800 -5.650L-4.900 2.830A5.650 5.650 0 0 0 4.900 2.830L0 11.300A11.300 11.300 0 0 1 -9.800 -5.650z" fill="#23a35a" />
          <path d="M0 -5.650H9.800A11.300 11.300 0 0 1 0 11.300L4.900 2.830A5.650 5.650 0 0 0 0 -5.650z" fill="#fdd04b" />
          <circle r="5.400" fill="#fff" /><circle r="4.300" fill="#4a86ee" />
        </svg>
        <Running $w={49} />
      </TaskCell>
      <TaskCell>
        <svg width="25" height="24" viewBox="0 0 24 24">
          <path d="M17 0L6.500 10L2.200 6.700L0.300 7.800v8.400l1.900 1.100l4.300-3.300L17 24l7-3V3z" fill="#1480cf" />
          <path d="M17 0l7 3v18l-7 3z" fill="#27a2f2" />
          <path d="M17 7v10l-7-5zM2.300 9.500l2.500 2.500l-2.500 2.500z" fill="#d6d6d6" />
        </svg>
      </TaskCell>
      <TaskCell>
        <svg width="24" height="24">
          <path d="M12 3.500h10.500v17H12z" fill="#fff" stroke="#2b579a" />
          <path d="M14 7h7M14 9.500h7M14 12h7M14 14.500h7M14 17h7" stroke="#2b579a" />
          <path d="M0.500 3L14 0.500v23L0.500 21z" fill="#2b579a" />
          <text x="2" y="16" fontFamily="Noto Sans" fontWeight="700" fontSize="10" fill="#fff" textLength="10" lengthAdjust="spacingAndGlyphs">W</text>
        </svg>
        <Running $w={40} $stacked />
      </TaskCell>
      <TaskCell>
        <svg width="24" height="24">
          <rect width="24" height="24" fill="#3c2a6a" />
          <rect width="24" height="9" fill="#5a2f5c" />
          <circle cx="12" cy="12" r="9.600" fill="none" stroke="#cfcfcf" strokeWidth="2.600" strokeDasharray="3 2" />
          <circle cx="12" cy="12" r="8.600" fill="#241a2c" stroke="#ddd" />
          <g fontFamily="Noto Sans" fontWeight="700" fontSize="7.500" fill="#f28a2a">
            <text x="0.500" y="11" textLength="23" lengthAdjust="spacingAndGlyphs">Java EE</text>
            <text x="6.500" y="18" textLength="11" lengthAdjust="spacingAndGlyphs">IDE</text>
          </g>
        </svg>
        <Running $w={40} />
      </TaskCell>
    </>
  );
}

function TaskRow() {
  return (
    <Taskbar>
      <StartButton>
        <svg width="16" height="16" viewBox="0 0 16 16">
          <path d="M0 2.200L6.500 1.300v6.300H0zM7.300 1.200L16 0v7.600H7.300zM0 8.400h6.500v6.300L0 13.800zM7.300 8.400H16V16l-8.700-1.200z" />
        </svg>
      </StartButton>
      <SearchBox>
        <svg width="17" height="17" viewBox="0 0 17 17" fill="none" stroke="#222" strokeWidth="1.300">
          <circle cx="10.500" cy="6" r="5.200" />
          <path d="M7 10L0.800 16" />
        </svg>
        <Fit w={176} l={12} size={15} color="#333">Escreva aqui para procurar</Fit>
      </SearchBox>
      <TaskIcons />
      <Line $h={40}>
        <Slot $l={271} $t={0}>
          <svg width="12" height="8" viewBox="0 0 12 8"><path d="M0.500 7L6 1.500L11.500 7" stroke="#111" strokeWidth="1.400" fill="none" /></svg>
        </Slot>
        <Slot $l={13} $t={2}>
          <svg width="13" height="13" viewBox="0 0 13 13" fill="none" stroke="#111">
            <path d="M1 12.500A11.500 11.500 0 0 1 12.500 1" stroke="#666" />
            <path d="M3.800 12.500A8.700 8.700 0 0 1 12.500 3.800M6.500 12.500a6 6 0 0 1 6-6M9.200 12.500A3.300 3.300 0 0 1 12.500 9.200" />
            <circle cx="12" cy="12" r="1" fill="#111" />
          </svg>
        </Slot>
        <Slot $l={8}>
          <svg width="17" height="14" viewBox="0 0 17 14" fill="none" stroke="#111" strokeWidth="1.100">
            <path d="M0.600 4.500h2.500L6 1.500v11L3.100 9.500H0.600zM8.500 5a3 3 0 0 1 0 4M10.700 3a6 6 0 0 1 0 8M13 1a9 9 0 0 1 0 12" />
          </svg>
        </Slot>
        <Slot $l={7}>
          <svg width="16" height="10" viewBox="0 0 16 10">
            <path d="M4.500 2.500h9v6.500h-9z" fill="none" stroke="#111" /><path d="M5.500 3.500h7v4.500h-7zM14.500 4H16v3h-1.500z" fill="#111" />
            <path d="M0 2h5v2.500L3 6v3H2V6L0 4.500zM1 0h1v2H1zM3 0h1v2H3z" fill="#111" />
          </svg>
        </Slot>
      </Line>
      <Clock>
        <Fit w={27} l={17} color="#111">17:19</Fit>
        <Fit w={59} l={1} color="#111">07/09/2020</Fit>
      </Clock>
      <Line $h={40} $pl={17}>
        <svg width="17" height="17" viewBox="0 0 17 17">
          <path d="M0 0h16v12H9v4l-4-4H0z" />
          <path d="M2.500 3.500h11M2.500 6h11M2.500 8.500h7" stroke="#d6d6d6" />
          <circle cx="12" cy="12" r="4" fill="#d6d6d6" /><circle cx="12" cy="12" r="3.300" fill="#111" />
          <path d="M10 13a3 3 0 0 0 2.500-3.500" stroke="#d6d6d6" fill="none" />
        </svg>
      </Line>
      <DesktopEdge />
    </Taskbar>
  );
}

export default function App() {
  return (
    <Desktop>
      <GlobalStyle />
      <SlideView />
      <WordWindow>
        <TitleRow />
        <Tabs />
        <Ribbon>
          <ClipboardGroup />
          <GroupRule />
          <FontGroup />
          <GroupRule />
          <ParagraphGroup />
          <GroupRule />
          <StyleGroup />
          <GroupRule />
          <EditGroup />
          <GroupRule />
          <CollapseCorner>
            <svg width="9" height="6" viewBox="0 0 9 6"><path d="M0.700 5.300L4.500 1.500L8.300 5.300" stroke="#666" strokeWidth="1.800" fill="none" /></svg>
          </CollapseCorner>
        </Ribbon>
        <Workspace>
          <Navigation />
          <Page>
            <Paragraph>
              <Fit w={80} {...docText}>Um Vetor ou&nbsp;</Fit>
              <Fit w={34} {...docText}><Misspelled>array&nbsp;</Misspelled></Fit>
              <Fit w={281} {...docText}>é a estrutura de dados mais simples que existe.</Fit>
            </Paragraph>
            <Paragraph>
              <Fit w={464} {...docText}>Um vetor armazena uma sequência de valores onde todos são do mesmo tipo</Fit>
            </Paragraph>
            <Paragraph />
            <Paragraph>
              <Fit w={125} {...docText}><Misspelled>Temperaturas.length</Misspelled></Fit>
            </Paragraph>
            <Paragraph>
              <Fit w={136} {...docText}>Lê o tamanho do vetor</Fit>
            </Paragraph>
          </Page>
        </Workspace>
        <Status />
        <TaskRow />
      </WordWindow>
    </Desktop>
  );
}
